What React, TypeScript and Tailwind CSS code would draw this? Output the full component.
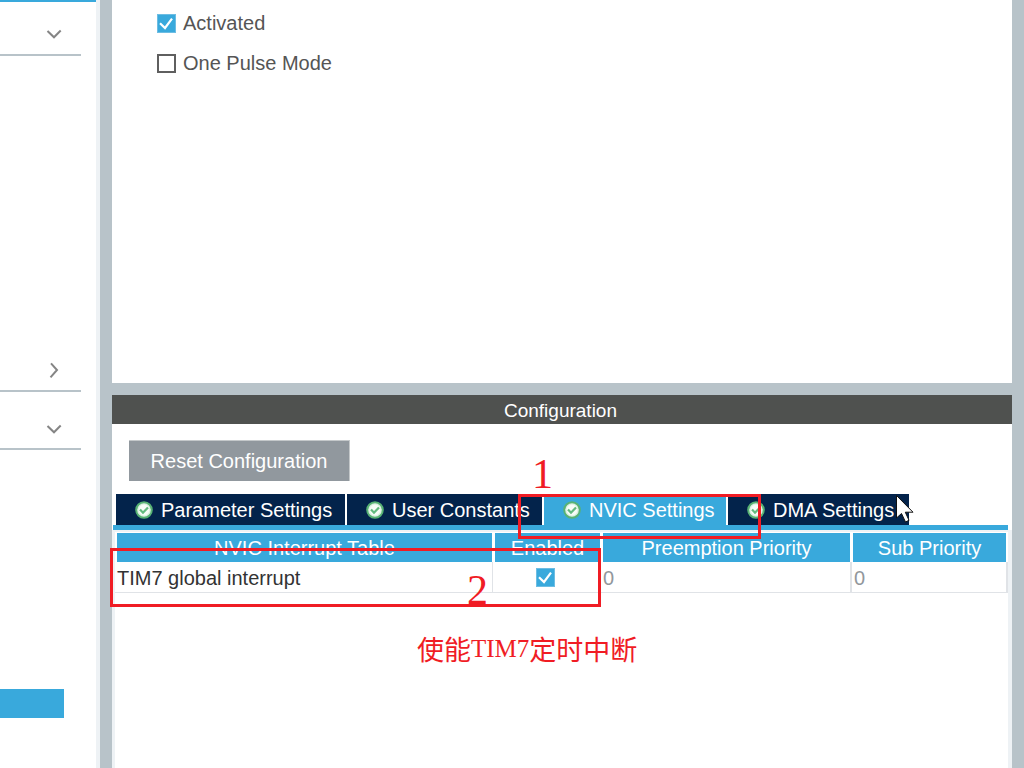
import React from "react";

function Check({ id, label, checked = false }: { id: string; label: string; checked?: boolean }) {
  return (
    <span className="relative inline-grid size-[19px] shrink-0">
      <input
        id={id}
        type="checkbox"
        aria-label={label}
        defaultChecked={checked}
        className="peer size-[19px] appearance-none border-2 border-[#5f5f5f] bg-white checked:border checked:border-[#6dbde3] checked:bg-[#39a9dc]"
      />
      <svg
        viewBox="0 0 19 19"
        className="pointer-events-none absolute inset-0 hidden size-[19px] peer-checked:block"
        fill="none"
        stroke="white"
        strokeWidth="2.2"
      >
        <path d="M3 9.2 8 14 15 4.6" />
      </svg>
    </span>
  );
}

function Chevron({ right = false }: { right?: boolean }) {
  return (
    <svg width="16" height="16" viewBox="0 0 16 16" fill="none" stroke="#858585" strokeWidth="2">
      <path d={right ? "M5 1.3 11 8 4.5 15.3" : "M1.5 5 8 11.3 14.7 4.5"} />
    </svg>
  );
}

function Badge() {
  return (
    <svg width="18" height="18" viewBox="0 0 18 18" fill="none" className="shrink-0">
      <circle cx="9" cy="9" r="7.8" fill="#dcf0e2" stroke="#58b274" strokeWidth="2" />
      <circle cx="9" cy="9" r="5.4" fill="#f7fcf8" />
      <path d="M5 8.4 8 11.7 13 6.4" stroke="#63ba7f" strokeWidth="2.2" />
    </svg>
  );
}

function Section({ name, className, right }: { name: string; className: string; right?: boolean }) {
  return (
    <button
      type="button"
      aria-label={name}
      className={`mr-[15px] flex items-center justify-end border-b-2 border-[#b8c3c9] pr-[19px] ${className}`}
    >
      <Chevron right={right} />
    </button>
  );
}

const tabs = [
  { name: "Parameter Settings", width: "w-[229px]", active: false },
  { name: "User Constants", width: "w-[195px]", active: false },
  { name: "NVIC Settings", width: "w-[182px]", active: true },
  { name: "DMA Settings", width: "w-[181px]", active: false },
];

const th = "h-[29px] border-l-2 border-white bg-[#39a9dc] bg-clip-padding p-0 text-center font-normal leading-[31px] text-white";
const td = "h-[31px] border-b border-[#e0e3e7] p-0 leading-[30px]";

export default function App() {
  return (
    <div className="relative flex h-screen overflow-hidden bg-[#b8c3c9] pr-3 font-['Liberation_Sans',Arial,sans-serif] text-[20px]">
      <aside className="mr-3 flex w-[100px] shrink-0 flex-col border-r-4 border-[#eef2f5] bg-white">
        <div className="h-[2px] bg-[#39a9dc]" />
        <Section name="Timers" className="h-[54px] pt-3" />
        <div className="h-[294px]" />
        <Section name="Connectivity" className="h-[42px]" right />
        <Section name="Multimedia" className="h-[58px] pt-[18px]" />
        <div className="mt-[239px] h-[29px] w-16 shrink-0 bg-[#39a9dc]" />
      </aside>

      <main className="flex min-w-0 flex-1 flex-col gap-3">
        <section className="flex h-[383px] shrink-0 flex-col gap-4 bg-white pl-[45px] pt-[11px] text-[#555]">
          <div className="flex h-6 items-center gap-[7px]">
            <Check id="activated" label="Activated" checked />
            <label htmlFor="activated">Activated</label>
          </div>
          <div className="flex h-6 items-center gap-[7px]">
            <Check id="pulse" label="One Pulse Mode" />
            <label htmlFor="pulse">One Pulse Mode</label>
          </div>
        </section>

        <section className="flex min-h-0 flex-1 flex-col bg-white">
          <h2 className="h-[29px] shrink-0 bg-[#4f514f] pr-[3px] text-center text-[19px] leading-[31px] text-white">
            Configuration
          </h2>
          <div className="px-[17px] pt-4">
            <button
              type="button"
              className="h-[41px] w-[221px] border-r border-t border-[#c4c8ca] bg-[#91989e] text-white"
            >
              Reset Configuration
            </button>
          </div>
          <div role="tablist" className="mt-[13px] flex gap-[2px] pl-1">
            {tabs.map((t) => (
              <button
                key={t.name}
                type="button"
                role="tab"
                aria-selected={t.active}
                className={`flex h-[31px] items-center gap-2 whitespace-nowrap pl-[19px] text-white ${t.width} ${
                  t.active ? "bg-[#39a9dc] pl-[17px]" : "bg-[#03234b]"
                }`}
              >
                <Badge />
                {t.name}
              </button>
            ))}
          </div>
          <div className="ml-px mr-1 h-[5px] shrink-0 bg-[#39a9dc]" />
          <div className="min-h-0 flex-1 border-l-[3px] border-r-4 border-t-2 border-[#eef2f5] pt-px">
            <table className="w-full table-fixed border-separate border-spacing-0">
              <colgroup>
                <col className="w-[42.33%]" />
                <col className="w-[12.1%]" />
                <col className="w-[28%]" />
                <col />
              </colgroup>
              <thead>
                <tr className="h-[29px]">
                  <th className={`${th} border-r`}><div className="h-[29px]">NVIC Interrupt Table</div></th>
                  <th className={`${th} border-r`}><div className="h-[29px]">Enabled</div></th>
                  <th className={`${th} border-r`}><div className="h-[29px]">Preemption Priority</div></th>
                  <th className={`${th} border-r-2`}><div className="h-[29px]">Sub Priority</div></th>
                </tr>
              </thead>
              <tbody>
                <tr>
                  <td className={`${td} border-r pl-[2px] text-[#333]`}><div className="h-[30px] leading-[32px]">TIM7 global interrupt</div></td>
                  <td className={`${td} border-r text-center`}>
                    <div className="flex h-[30px] items-center justify-center pr-[2px]">
                      <Check id="tim7" label="Enabled" checked />
                    </div>
                  </td>
                  <td className={`${td} border-r pl-[2px] text-[#92979c]`}><div className="h-[30px] leading-[32px]">0</div></td>
                  <td className={`${td} border-l border-r-2 pl-[2px] text-[#92979c]`}><div className="h-[30px] leading-[32px]">0</div></td>
                </tr>
              </tbody>
            </table>
          </div>
        </section>
      </main>

      <div className="pointer-events-none absolute left-[518px] top-[494px] h-[45px] w-[243px] border-[3px] border-[#f01c24]" />
      <div className="pointer-events-none absolute left-[110px] top-[548px] h-[59px] w-[491px] border-[3px] border-[#f01c24]" />
      <span className="absolute left-[532px] top-[453px] font-['Liberation_Serif',serif] text-[42px] leading-[42px] text-[#f01c24]">1</span>
      <span className="absolute left-[467px] top-[569px] font-['Liberation_Serif',serif] text-[42px] leading-[42px] text-[#f01c24]">2</span>
      <p className="absolute left-[417px] top-[631px] flex items-center whitespace-nowrap font-['Noto_Sans_CJK_SC',sans-serif] text-[27px] font-normal leading-[36px] text-[#f01c24]">
        使能<span className="font-['Liberation_Serif',serif] text-[25px]">TIM7</span>定时中断
      </p>
      <svg className="pointer-events-none absolute left-[895px] top-[494px]" width="21" height="30" viewBox="0 0 21 30">
        <path d="M1.5 1.5V24L6.5 19.5 10.5 28 14 26.3 10.3 18.2H18Z" fill="white" stroke="#111" strokeWidth="1" />
      </svg>
    </div>
  );
}
